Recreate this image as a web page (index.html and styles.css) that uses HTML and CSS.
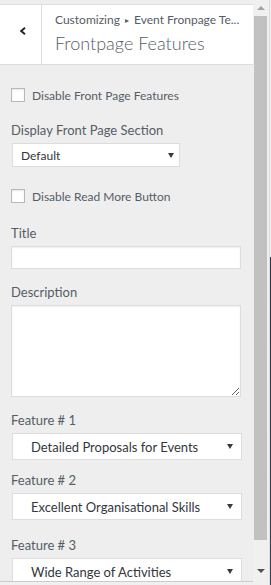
FILE: index.html
```html
<!DOCTYPE html>
<html lang="en">
<head>
    <meta charset="UTF-8">
    <meta name="viewport" content="width=device-width, initial-scale=1.0">
    <title>Frontpage Features</title>
    <link rel="stylesheet" href="styles.css">
</head>
<body>
    <div class="screen">
        <!-- Customizer section panel -->
        <div class="panel">
            <div class="top-strip"></div>
            <div class="header">
                <div class="back">
                    <svg width="8" height="8" viewBox="0 0 8 8"><polyline points="6,0.8 2.2,4 6,7.2" fill="none" stroke="#23282d" stroke-width="2"/></svg>
                </div>
                <div class="titles">
                    <div class="crumb">Customizing <span class="sep">&#9656;</span> Event Fronpage Te...</div>
                    <div class="heading">Frontpage Features</div>
                </div>
            </div>

            <div class="controls">
                <label class="check first">
                    <input type="checkbox">
                    <span>Disable Front Page Features</span>
                </label>

                <div class="control">
                    <div class="control-title">Display Front Page Section</div>
                    <div class="select small">
                        <span>Default</span>
                        <span class="arrow"></span>
                    </div>
                </div>

                <label class="check">
                    <input type="checkbox">
                    <span>Disable Read More Button</span>
                </label>

                <div class="control gap-l">
                    <div class="control-title">Title</div>
                    <input class="text-input" type="text">
                </div>

                <div class="control gap-m">
                    <div class="control-title">Description</div>
                    <textarea class="text-area"></textarea>
                </div>

                <div class="control gap-m">
                    <div class="control-title">Feature # 1</div>
                    <div class="select wide">
                        <span>Detailed Proposals for Events</span>
                        <span class="arrow"></span>
                    </div>
                </div>

                <div class="control gap-s">
                    <div class="control-title">Feature # 2</div>
                    <div class="select wide">
                        <span>Excellent Organisational Skills</span>
                        <span class="arrow"></span>
                    </div>
                </div>

                <div class="control">
                    <div class="control-title">Feature # 3</div>
                    <div class="select wide">
                        <span>Wide Range of Activities</span>
                        <span class="arrow"></span>
                    </div>
                </div>
            </div>
            <div class="bottom-strip"></div>
        </div>

        <!-- Scrollbar of the panel -->
        <div class="scrollbar">
            <div class="sb-button"><span class="sb-up"></span></div>
            <div class="sb-track"><div class="sb-thumb"></div></div>
            <div class="sb-button"><span class="sb-down"></span></div>
            <div class="sb-foot"></div>
        </div>

        <!-- Edge of the site preview -->
        <div class="edge"></div>
    </div>
</body>
</html>
```

FILE: styles.css
```css
body {
    margin: 0;
    font-family: Lato, "Open Sans", sans-serif;
    color: #555d66;
}

.screen {
    display: flex;
    width: 271px;
    height: 585px;
    background: #eeeeee;
    overflow: hidden;
}

.panel {
    width: 253px;
    display: flex;
    flex-direction: column;
}

.top-strip {
    height: 4px;
    border-bottom: 1px solid #dddddd;
}

.header {
    height: 59px;
    display: flex;
    background: #ffffff;
    border-bottom: 1px solid #dddddd;
}

.back {
    width: 42px;
    border-right: 1px solid #dddddd;
    padding: 22px 0 0 19px;
    box-sizing: border-box;
}

.back svg {
    display: block;
}

.titles {
    padding: 7px 0 0 13px;
    white-space: nowrap;
}

.crumb {
    font-size: 12px;
    line-height: 16px;
    color: #555d66;
}

.crumb .sep {
    font-size: 8px;
    vertical-align: 1px;
    padding: 0 2px;
}

.heading {
    margin-top: 3px;
    font-size: 18px;
    font-weight: 300;
    line-height: 24px;
    color: #555d66;
}

.controls {
    flex: 1;
    overflow: hidden;
    padding: 0 12px 0 11px;
}

/* Checkbox rows */
.check {
    display: flex;
    align-items: center;
    height: 20px;
    margin-top: 19px;
    font-size: 12px;
}

.check.first {
    margin-top: 20px;
}

.check input {
    appearance: none;
    width: 14px;
    height: 14px;
    margin: 0 7px 0 0;
    background: #ffffff;
    border: 1px solid #b4b9be;
    box-shadow: inset 0 1px 2px rgba(0, 0, 0, 0.1);
    box-sizing: border-box;
}

/* Titled controls */
.control {
    margin-top: 15px;
}

.control.gap-s {
    margin-top: 10px;
}

.control.gap-m {
    margin-top: 13px;
}

.control.gap-l {
    margin-top: 17px;
}

.control-title {
    font-size: 13px;
    line-height: 20px;
    margin-bottom: 3px;
}

.text-input,
.text-area {
    display: block;
    width: 230px;
    margin: 0;
    background: #ffffff;
    border: 1px solid #dddddd;
    box-shadow: inset 0 1px 2px rgba(0, 0, 0, 0.07);
    box-sizing: border-box;
}

.text-input {
    height: 23px;
}

.text-area {
    height: 92px;
    resize: vertical;
}

/* Dropdowns */
.select {
    display: flex;
    align-items: center;
    margin-left: 1px;
    background: #ffffff;
    border: 1px solid #dddddd;
    box-sizing: border-box;
    color: #32373c;
}

.select.small {
    width: 168px;
    height: 24px;
    padding: 0 5px 0 8px;
    font-size: 12px;
}

.select.wide {
    width: 230px;
    height: 27px;
    padding: 0 8px 0 18px;
    font-size: 13px;
}

.select .arrow {
    margin-left: auto;
    border-left: 3px solid transparent;
    border-right: 3px solid transparent;
    border-top: 5px solid #3a3a3a;
}

.bottom-strip {
    height: 3px;
    border-top: 1px solid #cccccc;
    background: #f0f0f0;
}

/* Scrollbar */
.scrollbar {
    width: 16px;
    display: flex;
    flex-direction: column;
    background: #f0f0f0;
}

.sb-button {
    height: 16px;
    display: flex;
    justify-content: center;
    align-items: center;
}

.sb-up {
    border-left: 4px solid transparent;
    border-right: 4px solid transparent;
    border-bottom: 4px solid #a3a3a3;
}

.sb-down {
    border-left: 4px solid transparent;
    border-right: 4px solid transparent;
    border-top: 4px solid #505050;
}

.sb-track {
    flex: 1;
}

.sb-thumb {
    height: 524px;
    margin: 0 2px 0 1px;
    background: #c1c1c1;
}

.sb-foot {
    height: 6px;
}

.edge {
    width: 2px;
    border-left: 1px solid #dddddd;
    box-sizing: border-box;
    background: linear-gradient(#f0f0f0 0, #f0f0f0 257px, #2b3344 257px, #3a4254 100%);
}
```
